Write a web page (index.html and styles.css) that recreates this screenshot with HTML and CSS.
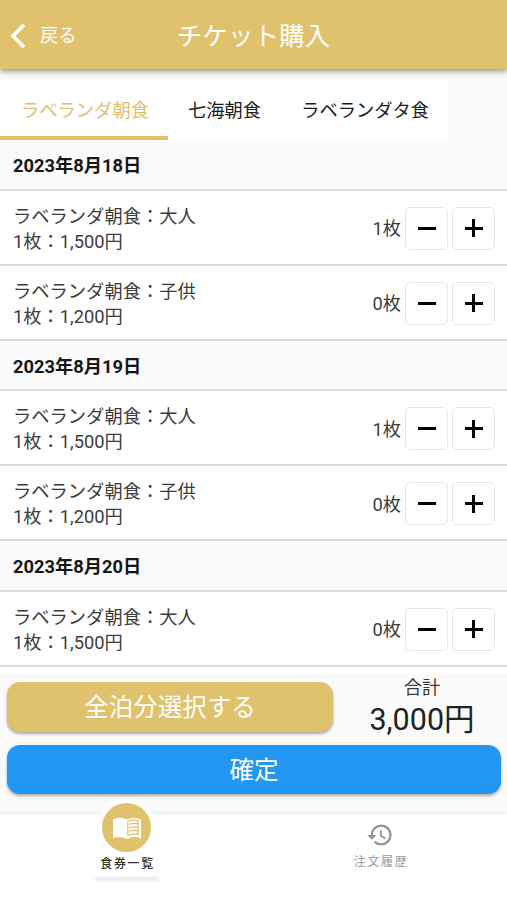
FILE: index.html
```html
<!DOCTYPE html>
<html lang="ja">
<head>
<meta charset="utf-8">
<title>チケット購入</title>
<link rel="stylesheet" href="styles.css">
</head>
<body>
<header class="bar">
  <a class="back"><svg width="16" height="26" viewBox="0 0 16 26"><path d="M14 2 3 13l11 11" fill="none" stroke="#fff" stroke-width="3.6"/></svg><span>戻る</span></a>
  <h1>チケット購入</h1>
</header>
<nav class="tabs">
  <a class="tab active">ラベランダ朝食</a><a class="tab">七海朝食</a><a class="tab">ラベランダタ食</a>
</nav>
<main class="list">
  <h2>2023年8月18日</h2>
  <div class="row"><p>ラベランダ朝食：大人<br>1枚：1,500円</p><span class="count">1枚</span><button class="step minus"></button><button class="step plus"></button></div>
  <div class="row"><p>ラベランダ朝食：子供<br>1枚：1,200円</p><span class="count">0枚</span><button class="step minus"></button><button class="step plus"></button></div>
  <h2>2023年8月19日</h2>
  <div class="row"><p>ラベランダ朝食：大人<br>1枚：1,500円</p><span class="count">1枚</span><button class="step minus"></button><button class="step plus"></button></div>
  <div class="row"><p>ラベランダ朝食：子供<br>1枚：1,200円</p><span class="count">0枚</span><button class="step minus"></button><button class="step plus"></button></div>
  <h2>2023年8月20日</h2>
  <div class="row"><p>ラベランダ朝食：大人<br>1枚：1,500円</p><span class="count">0枚</span><button class="step minus"></button><button class="step plus"></button></div>
</main>
<section class="summary">
  <div class="top">
    <button class="btn gold">全泊分選択する</button>
    <div class="total"><span class="label">合計</span><span class="price">3,000円</span></div>
  </div>
  <button class="btn blue">確定</button>
</section>
<footer class="nav">
  <a class="item selected">
    <span class="disc"><svg width="30" height="30" viewBox="0 0 30 30"><path fill="#fff" d="M1 6.500Q8 3 15 6.500Q22 3 29 6.500V25.500Q22 22.500 15 26Q8 22.500 1 25.500Z"/><path fill="none" stroke="#e0c16c" stroke-width="1.300" d="M15.800 22.500V8.500Q20.500 6.200 26 7.600V21.500Q20.500 20.300 15.800 22.500M17.500 11.300Q21.500 9.800 26 10.700M17.500 14.800Q21.500 13.300 26 14.200M17.500 18.300Q21.500 16.800 26 17.700"/></svg></span>
    <span class="caption">食券一覧</span>
    <span class="shade"></span>
  </a>
  <a class="item">
    <svg class="history" width="28" height="28" viewBox="0 0 24 24"><path fill="#929292" d="M13 3a9 9 0 0 0-9 9H1l3.890 3.890.07.14L9 12H6c0-3.870 3.130-7 7-7s7 3.130 7 7-3.130 7-7 7c-1.930 0-3.680-.79-4.940-2.060l-1.420 1.420A8.954 8.954 0 0 0 13 21a9 9 0 0 0 0-18zm-1 5v5l4.280 2.540.72-1.210-3.500-2.080V8H12z"/></svg>
    <span class="caption">注文履歴</span>
  </a>
</footer>
</body>
</html>
```

FILE: styles.css
```css
* { box-sizing: border-box; }
body {
  margin: 0;
  height: 900px;
  overflow: hidden;
  display: flex;
  flex-direction: column;
  background: #fafafa;
  color: #2a2a2a;
  font: 18.3px/25px Roboto, "Noto Sans CJK JP", sans-serif;
}
button { font: inherit; border: 0; padding: 0; }
h1, h2, p { margin: 0; font-weight: 400; }
.bar {
  height: 69px;
  flex: none;
  display: grid;
  grid-template-columns: 1fr auto 1fr;
  align-items: center;
  padding-top: 2px;
  background: #e0c16c;
  color: #fff;
  box-shadow: 0 2px 6px rgba(0, 0, 0, .45);
}
.back { display: flex; align-items: center; gap: 14px; padding-left: 10px; }
.bar h1 { font-size: 25.5px; line-height: 36px; }
.tabs { display: flex; width: 448px; height: 59px; margin-top: 12px; flex: none; background: #fff; }
.tab { padding: 17px 20px 0; color: #1c1c1c; white-space: nowrap; }
.tab.active { width: 168px; padding-left: 21px; color: #e0c16c; border-bottom: 4px solid #e0c16c; }
.list { flex: none; height: 534px; background: #fff; }
.list h2 {
  height: 50.5px;
  padding: 13px 13px 0;
  font-size: 18.3px;
  font-weight: 700;
  background: #fafafa;
  color: #161616;
  border-bottom: 2px solid #dcdcdc;
}
.row { display: flex; align-items: center; height: 75px; padding: 2px 12px 0 13px; border-bottom: 2px solid #dcdcdc; background: #fff; }
.row p { flex: 1; padding-top: 1px; color: #3c3c3c; }
.count { margin-right: 4px; padding-top: 1px; color: #3c3c3c; }
.step {
  width: 43px;
  height: 43px;
  border: 1.5px solid #e6e6e6;
  border-radius: 5px;
  background: linear-gradient(#000, #000) center / 18px 3px no-repeat #fff;
}
.step + .step { margin-left: 4px; }
.plus { background: linear-gradient(#000, #000) center / 18px 3px no-repeat, linear-gradient(#000, #000) center / 3px 18px no-repeat #fff; }
.summary { height: 140px; flex: none; padding: 0 6px 0 7px; }
.top { display: flex; height: 71px; }
.btn { display: block; height: 50px; border-radius: 13px; color: #fff; font-size: 24.5px; line-height: 48px; padding-top: 2px; box-shadow: 0 2px 3px rgba(0, 0, 0, .32); }
.gold { width: 326px; margin-top: 8px; background: #e0c16c; }
.blue { width: 494px; height: 49px; background: #2196f3; }
.total { flex: 1; display: flex; flex-direction: column; align-items: center; padding: 1px 0 0 10px; }
.label { line-height: 25px; color: #3c3c3c; }
.price { font-size: 30.5px; line-height: 40px; color: #222; }
.nav { flex: 1; display: flex; background: #fff; box-shadow: 0 -1px 3px rgba(0, 0, 0, .08); }
.item { width: 50%; display: flex; flex-direction: column; align-items: center; color: #999; }
.caption { font-size: 12px; line-height: 16px; letter-spacing: 1.6px; margin-right: -1.6px; }
.selected { color: #333; }
.selected .caption { font-weight: 500; }
.disc {
  width: 49px;
  height: 49px;
  margin-top: -11px;
  margin-bottom: 4px;
  border-radius: 50%;
  background: #e0c16c;
  box-shadow: 0 0 0 4px #fff;
  display: flex;
  align-items: center;
  justify-content: center;
}
.shade { width: 64px; height: 6px; margin-top: 5px; border-radius: 2px; background: linear-gradient(#e2e2e2, #fff); filter: blur(1px); }
.history { margin: 7px 0 5px; }
```
